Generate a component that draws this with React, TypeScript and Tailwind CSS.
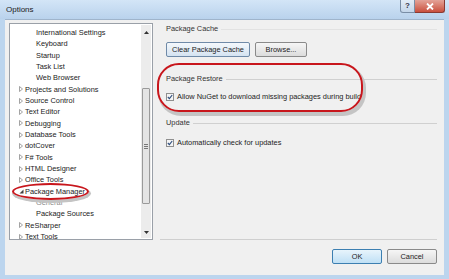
import React from "react";

const font = { fontFamily: '"Liberation Sans", Arial, sans-serif' };

type Node = { label: string; level: 0 | 1; arrow?: "closed" | "open"; selected?: boolean };

const treeItems: Node[] = [
  { label: "International Settings", level: 1 },
  { label: "Keyboard", level: 1 },
  { label: "Startup", level: 1 },
  { label: "Task List", level: 1 },
  { label: "Web Browser", level: 1 },
  { label: "Projects and Solutions", level: 0, arrow: "closed" },
  { label: "Source Control", level: 0, arrow: "closed" },
  { label: "Text Editor", level: 0, arrow: "closed" },
  { label: "Debugging", level: 0, arrow: "closed" },
  { label: "Database Tools", level: 0, arrow: "closed" },
  { label: "dotCover", level: 0, arrow: "closed" },
  { label: "F# Tools", level: 0, arrow: "closed" },
  { label: "HTML Designer", level: 0, arrow: "closed" },
  { label: "Office Tools", level: 0, arrow: "closed" },
  { label: "Package Manager", level: 0, arrow: "open" },
  { label: "General", level: 1, selected: true },
  { label: "Package Sources", level: 1 },
  { label: "ReSharper", level: 0, arrow: "closed" },
  { label: "Text Tools", level: 0, arrow: "closed" }
];

const Arrow = ({ kind }: { kind?: "closed" | "open" }) => {
  if (!kind) return <span className="w-[11px]" />;
  return (
    <span className="w-[11px] flex items-center justify-start pl-[5px]">
      {kind === "closed" ? (
        <svg width="4" height="6" viewBox="0 0 4 6">
          <path d="M0.5 0.5 L3.5 3 L0.5 5.5 Z" fill="none" stroke="#8c8c8c" strokeWidth="0.8" />
        </svg>
      ) : (
        <svg width="5" height="5" viewBox="0 0 5 5">
          <path d="M4.5 0.5 L4.5 4.5 L0.5 4.5 Z" fill="#404040" />
        </svg>
      )}
    </span>
  );
};

const Check = () => (
  <span className="w-[8px] h-[8px] border border-[#8f8f8f] bg-[#f4f4f4] flex items-center justify-center">
    <svg width="6" height="6" viewBox="0 0 6 6">
      <path d="M0.8 3 L2.4 4.6 L5.2 1" fill="none" stroke="#2c4c7c" strokeWidth="1.1" />
    </svg>
  </span>
);

const GroupLabel = ({ text, line = "bg-[#d0d0d0]" }: { text: string; line?: string }) => (
  <div className="flex items-center h-[10px] gap-[3px]">
    <span className="text-[7.4px] text-[#333] whitespace-nowrap">{text}</span>
    <span className={`flex-1 h-px ${line}`} />
  </div>
);

const Tree = () => (
  <div className="relative ml-[4px] mt-[3px] w-[144px] h-[217px] bg-white border border-[#9aa0a8] flex">
    <div className="flex-1 pt-[3px] overflow-hidden">
      {treeItems.map((item, i) => (
        <div key={i} className="h-[11.33px] flex items-center">
          {item.level === 1 ? (
            <span className="w-[26px]" />
          ) : (
            <span className="w-[4px]" />
          )}
          {item.level === 0 && <Arrow kind={item.arrow} />}
          <span
            className={`text-[7.4px] whitespace-nowrap leading-none ${
              item.selected ? "text-[#8a8a8a]" : "text-[#222]"
            }`}
          >
            {item.label}
          </span>
        </div>
      ))}
    </div>
    {/* scrollbar */}
    <div className="w-[10px] my-[1px] mr-[1px] bg-[#ececec] flex flex-col items-center">
      <div className="h-[14px] flex items-center justify-center">
        <svg width="5" height="3" viewBox="0 0 5 3">
          <path d="M0 3 L2.5 0 L5 3 Z" fill="#333" />
        </svg>
      </div>
      <div className="mt-[49px] w-[8px] h-[116px] border border-[#9a9a9a] rounded-[1px] bg-[#e4e4e4] flex flex-col items-center justify-center gap-[1px]">
        <span className="w-[4px] h-px bg-[#777]" />
        <span className="w-[4px] h-px bg-[#777]" />
        <span className="w-[4px] h-px bg-[#777]" />
      </div>
      <div className="flex-1" />
      <div className="h-[12px] flex items-center justify-center">
        <svg width="5" height="3" viewBox="0 0 5 3">
          <path d="M0 0 L2.5 3 L5 0 Z" fill="#333" />
        </svg>
      </div>
    </div>
  </div>
);

const App: React.FC = () => {
  return (
    <div className="w-[449px] h-[279px] bg-[#bcd5ee] flex flex-col overflow-hidden" style={font}>
      {/* title bar */}
      <div className="h-[19px] flex items-start justify-between bg-gradient-to-b from-[#d3e5f7] to-[#b9d2ec]">
        <span className="ml-[6px] mt-[4px] text-[8px] text-[#1a1a1a]">Options</span>
        <div className="flex mr-[4px]">
          <div className="w-[15px] h-[13px] border border-[#7a8ea6] border-t-0 rounded-bl-[3px] bg-gradient-to-b from-[#e3edf7] to-[#c4d6ea] flex items-center justify-center text-[8px] font-bold text-[#334]">
            ?
          </div>
          <div className="w-[30px] h-[13px] border border-[#8a3a32] border-t-0 border-l-0 rounded-br-[3px] bg-gradient-to-b from-[#e3a398] to-[#c94f3e] flex items-center justify-center">
            <svg width="8" height="7" viewBox="0 0 8 7">
              <path d="M1 0.5 L7 6.5 M7 0.5 L1 6.5" stroke="#fff" strokeWidth="1.8" />
            </svg>
          </div>
        </div>
      </div>

      {/* client area */}
      <div className="relative flex-1 mx-[5px] mb-[4px] bg-[#f0f0f0] border-t border-[#9fb4cb] flex flex-col">
        <div className="flex h-[220px]">
          <Tree />
          <div className="flex-1 flex flex-col">
            <div className="flex-1 pl-[13px] pr-[7px] pt-[4px] flex flex-col">
              <GroupLabel text="Package Cache" line="bg-[#e2e2e2]" />
              <div className="flex gap-[5px] mt-[8px]">
                <button className="w-[84px] h-[15px] border border-[#6f8aa8] rounded-[2px] bg-gradient-to-b from-[#f4f8fc] to-[#d5e3f1] text-[7.4px] text-[#222]">
                  Clear Package Cache
                </button>
                <button className="w-[52px] h-[15px] border border-[#8a8a8a] rounded-[2px] bg-gradient-to-b from-[#f6f6f6] to-[#dcdcdc] text-[7.4px] text-[#222]">
                  Browse...
                </button>
              </div>
              <div className="mt-[17px]">
                <GroupLabel text="Package Restore" />
              </div>
              <div className="mt-[8px] flex items-center gap-[3px] h-[10px]">
                <Check />
                <span className="text-[7.4px] text-[#222] whitespace-nowrap">
                  Allow NuGet to download missing packages during build
                </span>
              </div>
              <div className="mt-[16px]">
                <GroupLabel text="Update" />
              </div>
              <div className="mt-[10px] flex items-center gap-[3px] h-[10px]">
                <Check />
                <span className="text-[7.4px] text-[#222] whitespace-nowrap">
                  Automatically check for updates
                </span>
              </div>
            </div>
            <div className="mx-[7px] h-px bg-[#cfcfcf]" />
          </div>
        </div>

        {/* buttons */}
        <div className="flex justify-end gap-[5px] pr-[7px] mt-[9px]">
          <button className="w-[50px] h-[15px] border border-[#3c7fb1] rounded-[2px] bg-gradient-to-b from-[#e8f4fc] to-[#bfe0f5] text-[7.4px] text-[#222]">
            OK
          </button>
          <button className="w-[50px] h-[15px] border border-[#8a8a8a] rounded-[2px] bg-gradient-to-b from-[#f6f6f6] to-[#dcdcdc] text-[7.4px] text-[#222]">
            Cancel
          </button>
        </div>

        {/* red annotation marks */}
        <div className="absolute left-[152px] top-[43px] w-[206px] h-[49px] rounded-[22px] border-2 border-[#c8161c] shadow-[2px_3px_0_1px_#c4c4c4]" />
        <div className="absolute left-[7px] top-[163px] w-[77px] h-[17px] rounded-[50%] border-2 border-[#c8161c] shadow-[1px_2px_0_1px_#c4c4c4]" />
      </div>
    </div>
  );
};

export default App;
